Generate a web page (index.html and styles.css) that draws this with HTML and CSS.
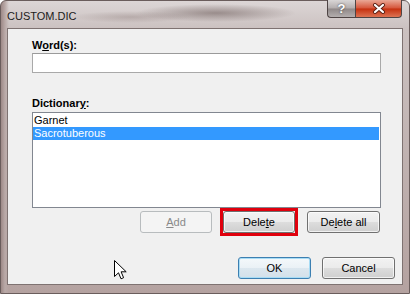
FILE: index.html
```html
<!DOCTYPE html>
<html lang="en">

<head>
    <meta charset="UTF-8" />
    <title>CUSTOM.DIC</title>
    <link rel="stylesheet" href="styles.css">
</head>

<body>
    <div class="window">
        <div class="titlebar">
            <span class="title">CUSTOM.DIC</span>
            <div class="caption">
                <span class="cap help">?</span>
                <span class="cap close">
                    <svg width="14" height="11" viewBox="0 0 14 11">
                        <path d="M3 2 L11 9 M11 2 L3 9" stroke="#5a2014" stroke-width="4" stroke-linecap="round" />
                        <path d="M3 2 L11 9 M11 2 L3 9" stroke="#ffffff" stroke-width="2.2" stroke-linecap="round" />
                    </svg>
                </span>
            </div>
        </div>

        <div class="panel">
            <label class="field-label" for="word">W<u>o</u>rd(s):</label>
            <input class="word" type="text" id="word" />

            <label class="field-label dict">Dictionar<u>y</u>:</label>
            <div class="listbox">
                <div class="item">Garnet</div>
                <div class="item selected">Sacrotuberous</div>
            </div>

            <div class="actions">
                <button type="button" class="btn" disabled><u>A</u>dd</button>
                <span class="marked">
                    <button type="button" class="btn">Dele<u>t</u>e</button>
                </span>
                <button type="button" class="btn wide">De<u>l</u>ete all</button>
            </div>

            <div class="dialog-buttons">
                <button type="button" class="btn wide default">OK</button>
                <button type="button" class="btn wide">Cancel</button>
            </div>

            <svg class="cursor" width="13" height="20" viewBox="0 0 13 20">
                <path d="M0.5 0.5 L0.5 16.5 L4.5 12.8 L7 18.8 L9.6 17.7 L7.1 11.8 L12.2 11.8 Z" fill="#ffffff" stroke="#000000" stroke-width="1" stroke-linejoin="miter" />
            </svg>
        </div>
    </div>
</body>

</html>
```

FILE: styles.css
```css
body {
    margin: 0;
    font-family: "Liberation Sans", Arial, sans-serif;
    font-size: 11px;
    color: #000;
}

.window {
    width: 410px;
    height: 294px;
    box-sizing: border-box;
    display: flex;
    flex-direction: column;
    padding: 0 6px 8px;
    border: 1px solid #6a5d5c;
    border-radius: 6px 6px 0 0;
    background:
        radial-gradient(ellipse 80px 9px at 215px 12px, rgba(105, 88, 86, 0.55), rgba(105, 88, 86, 0)),
        radial-gradient(ellipse 60px 6px at 130px 16px, rgba(120, 100, 98, 0.3), rgba(120, 100, 98, 0)),
        linear-gradient(90deg, #9d8987 0, #b9a9a7 4px, rgba(185, 169, 167, 0) 8px),
        linear-gradient(#dcd6d6 0, #cbc1c0 28px, #b4a2a0 100%);
}

.titlebar {
    height: 27px;
    display: flex;
    justify-content: space-between;
    align-items: flex-start;
}

.title {
    margin-top: 9px;
    line-height: 13px;
    color: #1b1b1b;
}

.caption {
    display: flex;
    margin-top: -1px;
    margin-right: 1px;
}

.cap {
    height: 18px;
    box-sizing: border-box;
    display: flex;
    align-items: center;
    justify-content: center;
    border: 1px solid #4e4444;
    border-top: none;
}

.help {
    width: 28px;
    border-radius: 0 0 0 4px;
    border-right: none;
    background: linear-gradient(#d9d6d6 0, #b3adad 48%, #8f8888 52%, #b4aeae 100%);
    color: #fff;
    font-weight: bold;
    font-size: 13px;
    text-shadow: 0 0 2px #333;
}

.close {
    width: 47px;
    border-radius: 0 0 4px 0;
    background: linear-gradient(#eaa896 0, #d5553a 48%, #c5300f 52%, #dd7353 100%);
}

.panel {
    flex: 1;
    position: relative;
    display: flex;
    flex-direction: column;
    align-items: stretch;
    background: #f0f0f0;
    border: 1px solid #7e7271;
    padding: 9px 21px 0 24px;
}

.field-label {
    font-weight: bold;
    line-height: 14px;
}

.word {
    margin: 1px 0 0;
    height: 20px;
    box-sizing: border-box;
    border: 1px solid #a9a9a9;
    border-top-color: #9a9a9a;
    background: #fff;
    padding: 0 3px;
    font: inherit;
}

.dict {
    margin-top: 23px;
}

.listbox {
    margin-top: 2px;
    height: 96px;
    box-sizing: border-box;
    border: 1px solid #828790;
    background: #fff;
    padding: 1px 1px 0 0;
}

.item {
    height: 13px;
    line-height: 13px;
    padding-left: 1px;
}

.item.selected {
    background: #3399ff;
    color: #fff;
}

.actions {
    display: flex;
    justify-content: flex-end;
    align-items: flex-start;
    margin: 3px 1px 0 0;
}

.btn {
    width: 72px;
    height: 22px;
    margin-left: 11px;
    padding: 0;
    font: inherit;
    color: #000;
    border: 1px solid #707070;
    border-radius: 3px;
    background: linear-gradient(#f2f2f2 0, #ebebeb 50%, #dddddd 50%, #cfcfcf 100%);
    box-shadow: inset 0 0 0 1px rgba(255, 255, 255, 0.7);
}

.btn.wide {
    width: 73px;
}

.btn:disabled {
    color: #8a8a8a;
    border-color: #b8bcbe;
    background: #f4f4f4;
    box-shadow: none;
}

.marked {
    display: flex;
    margin: -3px 0 -3px 8px;
    border: 3px solid #e0000d;
}

.marked .btn {
    margin-left: 0;
}

.actions .btn.wide {
    margin-left: 9px;
}

.dialog-buttons {
    display: flex;
    justify-content: flex-end;
    margin: 24px -14px 0 0;
}

.dialog-buttons .btn {
    margin-left: 11px;
}

.btn.default {
    border-color: #3c7fb1;
    background: linear-gradient(#f4f8fb 0, #eaf1f6 50%, #dce7ef 50%, #d3e0ea 100%);
    box-shadow: inset 0 0 0 1px #a8dcf5;
}

.cursor {
    position: absolute;
    left: 106px;
    top: 231px;
}
```
